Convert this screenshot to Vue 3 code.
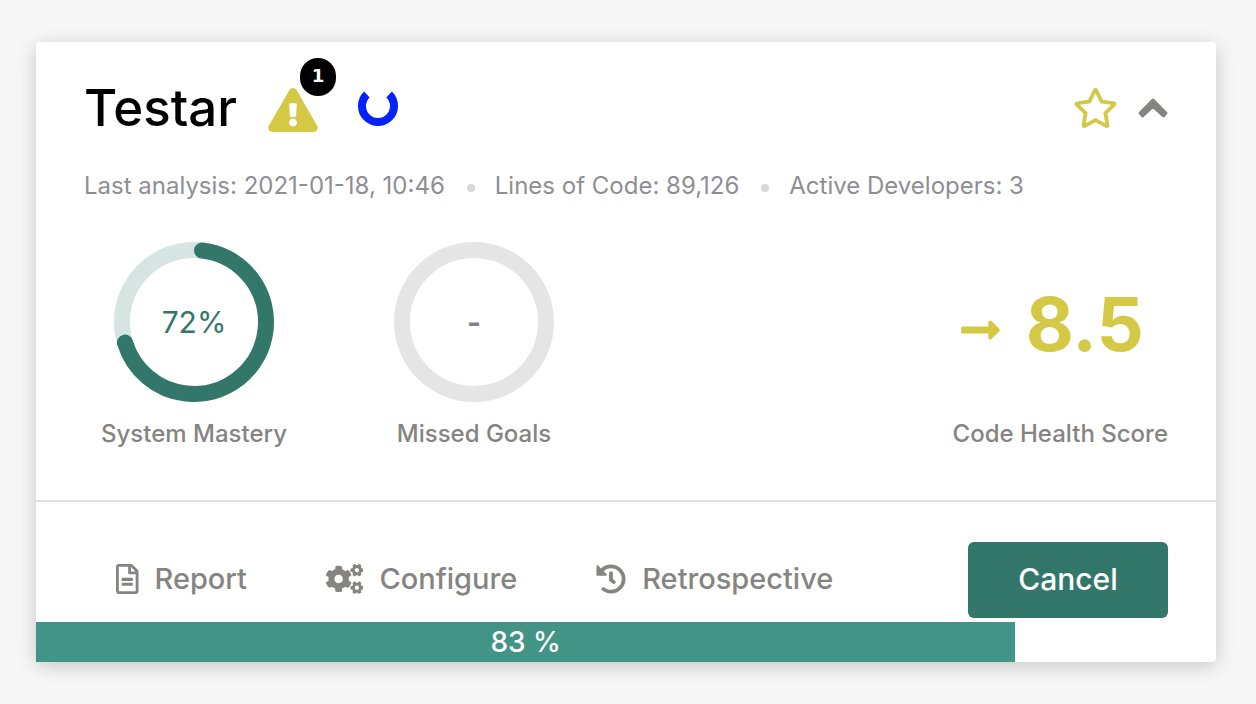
<script setup>
import { ref } from 'vue'

const warnings = ref(1)
const progress = ref(83)
const facts = ['Last analysis: 2021-01-18, 10:46', 'Lines of Code: 89,126', 'Active Developers: 3']

const gear =
  'l-8.2 14.3c-3 5.3-9.4 7.5-15.1 5.4-11.8-4.4-22.6-10.7-32.1-18.6-4.6-3.8-5.8-10.5-2.8-15.7l8.2-14.3c-6.9-8-12.3-17.3-15.9-27.4h-16.5c-6 0-11.2-4.3-12.2-10.3-2-12-2.1-24.6 0-37.1 1-6 6.2-10.4 12.2-10.4h16.5c3.6-10.1 9-19.4 15.9-27.4l-8.2-14.3c-3-5.2-1.9-11.9 2.8-15.7 9.5-7.9 20.4-14.2 32.1-18.6 5.7-2.1 12.1.1 15.1 5.4l8.2 14.3c10.5-1.9 21.2-1.9 31.7 0l8.2-14.3c3-5.3 9.4-7.5 15.1-5.4 11.8 4.4 22.6 10.7 32.1 18.6 4.6 3.8 5.8 10.5 2.8 15.7l-8.2 14.3c6.9 8 12.3 17.3 15.9 27.4h16.5c6 0 11.2 4.3 12.2 10.3 2 12 2.1 24.6 0 37.1-1 6-6.2 10.4-12.2 10.4h-16.5c-3.6 10.1-9 19.4-15.9 27.4l8.2 14.3c3 5.2 1.9 11.9-2.8 15.7-9.5 7.9-20.4 14.2-32.1 18.6-5.7 2.1-12.1-.1-15.1-5.4l-8.2-14.3c-10.4 1.9-21.2 1.9-31.7 0zm-10.5-58.8c38.5 29.6 82.4-14.3 52.8-52.8-38.5-29.7-82.4 14.3-52.8 52.8z'

const actions = [
  {
    label: 'Report',
    viewBox: '0 0 384 512',
    path: 'M288 248v28c0 6.6-5.4 12-12 12H108c-6.6 0-12-5.4-12-12v-28c0-6.6 5.4-12 12-12h168c6.6 0 12 5.4 12 12zm-12 72H108c-6.6 0-12 5.4-12 12v28c0 6.6 5.4 12 12 12h168c6.6 0 12-5.4 12-12v-28c0-6.6-5.4-12-12-12zm108-188.1V464c0 26.5-21.5 48-48 48H48c-26.5 0-48-21.5-48-48V48C0 21.5 21.5 0 48 0h204.1C264.8 0 277 5.1 286 14.1L369.9 98c9 8.9 14.1 21.2 14.1 33.9zm-128-80V128h76.1L256 51.9zM336 464V176H232c-13.3 0-24-10.7-24-24V48H48v416h288z'
  },
  {
    label: 'Configure',
    viewBox: '0 0 640 512',
    path:
      'M512.1 191' + gear +
      'M386.3 286.1l33.7 16.8c10.1 5.8 14.5 18.1 10.5 29.1-8.9 24.2-26.4 46.4-42.6 65.8-7.4 8.9-20.2 11.1-30.3 5.3l-29.1-16.8c-16 13.7-34.6 24.6-54.9 31.7v33.6c0 11.6-8.3 21.6-19.7 23.6-24.6 4.2-50.4 4.4-75.9 0-11.5-2-20-11.9-20-23.6V418c-20.3-7.2-38.9-18-54.9-31.7L74 403c-10 5.8-22.9 3.6-30.3-5.3-16.2-19.4-33.3-41.6-42.2-65.7-4-10.9.4-23.2 10.5-29.1l33.3-16.8c-3.9-20.9-3.9-42.4 0-63.4L12 205.8c-10.1-5.8-14.6-18.1-10.5-29 8.9-24.2 26-46.4 42.2-65.8 7.4-8.9 20.2-11.1 30.3-5.3l29.1 16.8c16-13.7 34.6-24.6 54.9-31.7V57.1c0-11.5 8.2-21.5 19.6-23.5 24.6-4.2 50.5-4.4 76-.1 11.5 2 20 11.9 20 23.6v33.6c20.3 7.2 38.9 18 54.9 31.7l29.1-16.8c10-5.8 22.9-3.6 30.3 5.3 16.2 19.4 33.2 41.6 42.1 65.8 4 10.9.1 23.2-10 29.1l-33.7 16.8c3.9 21 3.9 42.5 0 63.5zm-117.6 21.1c59.2-77-28.7-164.9-105.7-105.7-59.2 77 28.7 164.9 105.7 105.7z' +
      'M512.1 489.9' + gear
  },
  {
    label: 'Retrospective',
    viewBox: '0 0 512 512',
    path: 'M504 255.531c.253 136.64-111.18 248.372-247.82 248.468-59.015.042-113.223-20.53-155.822-54.911-11.077-8.94-11.905-25.541-1.839-35.607l11.267-11.267c8.609-8.609 22.353-9.551 31.891-1.984C173.062 425.135 212.781 440 256 440c101.705 0 184-82.311 184-184 0-101.705-82.311-184-184-184-48.814 0-93.149 18.969-126.068 49.932l50.754 50.754c10.08 10.08 2.941 27.314-11.313 27.314H24c-8.837 0-16-7.163-16-16V38.627c0-14.254 17.234-21.393 27.314-11.314l49.372 49.372C129.209 34.136 189.552 8 256 8c136.81 0 247.747 110.78 248 247.531zm-180.912 78.784l9.823-12.63c8.138-10.463 6.253-25.542-4.21-33.679L288 256.349V152c0-13.255-10.745-24-24-24h-16c-13.255 0-24 10.745-24 24v135.651l65.409 50.874c10.463 8.137 25.541 6.253 33.679-4.21z'
  }
]
</script>

<template>
  <main class="page">
    <article class="card">
      <section class="summary">
        <header class="head">
          <h1 class="title">Testar</h1>
          <span class="warning">
            <svg class="warning-icon" viewBox="0 0 576 512" aria-hidden="true">
              <path d="M569.517 440.013C587.975 472.007 564.806 512 527.94 512H48.054c-36.937 0-59.999-40.055-41.577-71.987L246.423 23.985c18.467-32.009 64.72-31.951 83.154 0l239.94 416.028zM288 354c-25.405 0-46 20.595-46 46s20.595 46 46 46 46-20.595 46-46-20.595-46-46-46zm-43.673-165.346l7.418 136c.347 6.364 5.609 11.346 11.982 11.346h48.546c6.373 0 11.635-4.982 11.982-11.346l7.418-136c.375-6.874-5.098-12.654-11.982-12.654h-63.383c-6.884 0-12.356 5.78-11.981 12.654z" />
            </svg>
            <span class="badge">{{ warnings }}</span>
          </span>
          <svg class="spinner" viewBox="0 0 40 40" role="img" aria-label="Analysis running">
            <path d="M31.1 8.5A16 16 0 1 1 8.9 8.5" />
          </svg>
          <span class="tools">
            <button class="icon-button star" type="button" aria-label="Add to favourites">
              <svg viewBox="0 0 576 512" aria-hidden="true">
                <path d="M528.1 171.5L382 150.2 316.7 17.8c-11.7-23.6-45.6-23.9-57.4 0L194 150.2 47.9 171.5c-26.2 3.8-36.7 36.1-17.7 54.6l105.7 103-25 145.5c-4.5 26.3 23.2 46 46.4 33.7L288 439.6l130.7 68.7c23.2 12.2 50.9-7.4 46.4-33.7l-25-145.5 105.7-103c19-18.5 8.5-50.8-17.7-54.6zM388.6 312.3l23.7 138.4L288 385.4l-124.3 65.3 23.7-138.4-100.6-98 139-20.2 62.2-126 62.2 126 139 20.2-100.6 98z" />
              </svg>
            </button>
            <button class="icon-button chevron" type="button" aria-label="Collapse">
              <svg viewBox="0 0 30 20" aria-hidden="true">
                <path d="M15 2.1L27.9 15.1 25.4 17.9 15 8.4 4.6 17.9 2.1 15.1z" />
              </svg>
            </button>
          </span>
        </header>

        <ul class="facts">
          <li v-for="fact in facts" :key="fact">{{ fact }}</li>
        </ul>

        <div class="metrics">
          <div class="metric">
            <div class="ring mastery">
              <svg viewBox="0 0 160 160" aria-hidden="true">
                <circle class="track" cx="80" cy="80" r="72" />
                <circle class="arc" cx="80" cy="80" r="72" pathLength="100" stroke-dasharray="68.6 100" transform="rotate(-83.6 80 80)" />
              </svg>
              <span class="ring-value">72%</span>
            </div>
            <span class="label">System Mastery</span>
          </div>
          <div class="metric">
            <div class="ring goals">
              <svg viewBox="0 0 160 160" aria-hidden="true">
                <circle class="track" cx="80" cy="80" r="72" />
              </svg>
              <span class="ring-value">-</span>
            </div>
            <span class="label">Missed Goals</span>
          </div>
          <div class="health">
            <div class="score">
              <svg class="arrow" viewBox="0 0 448 512" aria-hidden="true">
                <path d="M313.941 216H12c-6.627 0-12 5.373-12 12v56c0 6.627 5.373 12 12 12h301.941v46.059c0 21.382 25.851 32.09 40.971 16.971l86.059-86.059c9.373-9.373 9.373-24.569 0-33.941l-86.059-86.059c-15.119-15.119-40.971-4.411-40.971 16.971V216z" />
              </svg>
              <strong>8.5</strong>
            </div>
            <span class="label">Code Health Score</span>
          </div>
        </div>
      </section>

      <footer class="footer">
        <nav class="actions">
          <a v-for="action in actions" :key="action.label" class="action" href="#">
            <svg :viewBox="action.viewBox" aria-hidden="true"><path :d="action.path" /></svg>
            {{ action.label }}
          </a>
        </nav>
        <button class="cancel" type="button">Cancel</button>
      </footer>
      <div class="progress" role="progressbar" aria-label="Analysis progress" :aria-valuenow="progress" aria-valuemin="0" aria-valuemax="100">
        <div class="fill" :style="{ width: progress + '%' }">{{ progress }} %</div>
      </div>
    </article>
  </main>
</template>

<style>
body {
  margin: 0;
  background: #f7f7f7;
}
</style>

<style scoped>
.page {
  padding: 42px 40px 42px 36px;
  font-family: Inter, "Liberation Sans", sans-serif;
  color: #868482;
}
.card {
  background: #fff;
  border-radius: 4px;
  box-shadow: 0 4px 20px rgba(0, 0, 0, 0.2);
}
.summary {
  padding: 36px 48px 50px;
  border-bottom: 2px solid #dfdfdf;
}
.head {
  display: flex;
  align-items: center;
}
.title {
  margin: 0;
  font-size: 51px;
  line-height: 60px;
  font-weight: 500;
  color: #000;
}
.warning {
  position: relative;
  display: flex;
  margin: 4px 0 0 31px;
}
svg {
  display: block;
  fill: currentColor;
}
.warning-icon {
  width: 50px;
  height: 44px;
  color: #d3c944;
}
.badge {
  position: absolute;
  right: -18px;
  top: -30px;
  width: 36px;
  height: 38px;
  border-radius: 18px;
  background: #000;
  color: #fff;
  font: bold 18px/36px "DejaVu Sans", sans-serif;
  text-align: center;
}
.spinner {
  width: 40px;
  height: 40px;
  margin: 0 0 4px 40px;
}
.spinner path {
  fill: none;
  stroke: #0423fb;
  stroke-width: 8;
}
.tools {
  display: flex;
  align-items: center;
  gap: 20px;
  margin-left: auto;
}
.icon-button {
  padding: 0;
  border: 0;
  background: none;
  cursor: pointer;
}
.star {
  color: #d3c944;
}
.star svg {
  width: 45px;
  height: 40px;
}
.chevron {
  color: #868482;
}
.chevron svg {
  width: 30px;
  height: 20px;
  stroke: currentColor;
  stroke-width: 3;
  stroke-linejoin: round;
}
.facts {
  display: flex;
  align-items: center;
  margin: 32px 0 40px;
  padding: 0;
  list-style: none;
  font-size: 24px;
  line-height: 32px;
  color: #8e8e93;
}
.facts li {
  display: flex;
  align-items: center;
}
.facts li + li::before {
  content: "";
  width: 8px;
  height: 8px;
  margin: 4px 20px 0 22px;
  border-radius: 50%;
  background: #d8d8d8;
}
.metrics {
  display: flex;
  gap: 60px;
}
.metric {
  display: flex;
  flex-direction: column;
  align-items: center;
  min-width: 220px;
}
.ring {
  display: grid;
  place-items: center;
  margin-bottom: 16px;
}
.ring > * {
  grid-area: 1 / 1;
}
.ring svg {
  width: 160px;
  height: 160px;
}
.ring circle {
  fill: none;
  stroke-width: 16;
}
.mastery .track {
  stroke: #d6e5e1;
}
.mastery .arc {
  stroke: #33776b;
  stroke-linecap: round;
}
.goals .track {
  stroke: #e5e5e5;
}
.ring-value {
  font-size: 30px;
  line-height: 40px;
}
.mastery .ring-value {
  color: #33776b;
}
.goals .ring-value {
  font-weight: 700;
}
.label {
  font-size: 24px;
  line-height: 32px;
  font-weight: 500;
}
.health {
  display: flex;
  flex-direction: column;
  align-items: center;
  justify-content: flex-end;
  margin-left: auto;
}
.score {
  display: flex;
  align-items: center;
  gap: 26px;
  margin: 0 16px 50px 0;
  color: #d3c944;
}
.arrow {
  width: 39px;
  height: 44px;
  margin-top: 12px;
}
.score strong {
  font-size: 74px;
  line-height: 88px;
  font-weight: 700;
}
.footer {
  display: flex;
  align-items: center;
  justify-content: space-between;
  padding: 40px 48px 4px;
}
.actions {
  display: flex;
  gap: 79px;
  padding: 0 0 2px 32px;
}
.action {
  display: flex;
  align-items: center;
  gap: 16px;
  font-size: 29px;
  line-height: 40px;
  font-weight: 500;
  color: inherit;
  text-decoration: none;
}
.action svg {
  height: 30px;
}
.cancel {
  width: 200px;
  height: 76px;
  padding: 0 0 2px;
  border: 0;
  border-radius: 6px;
  background: #33776b;
  color: #fff;
  font: 500 30px/40px Inter, "Liberation Sans", sans-serif;
  cursor: pointer;
}
.fill {
  background: #429486;
  color: #fff;
  font-size: 28px;
  line-height: 40px;
  font-weight: 500;
  text-align: center;
}
</style>
